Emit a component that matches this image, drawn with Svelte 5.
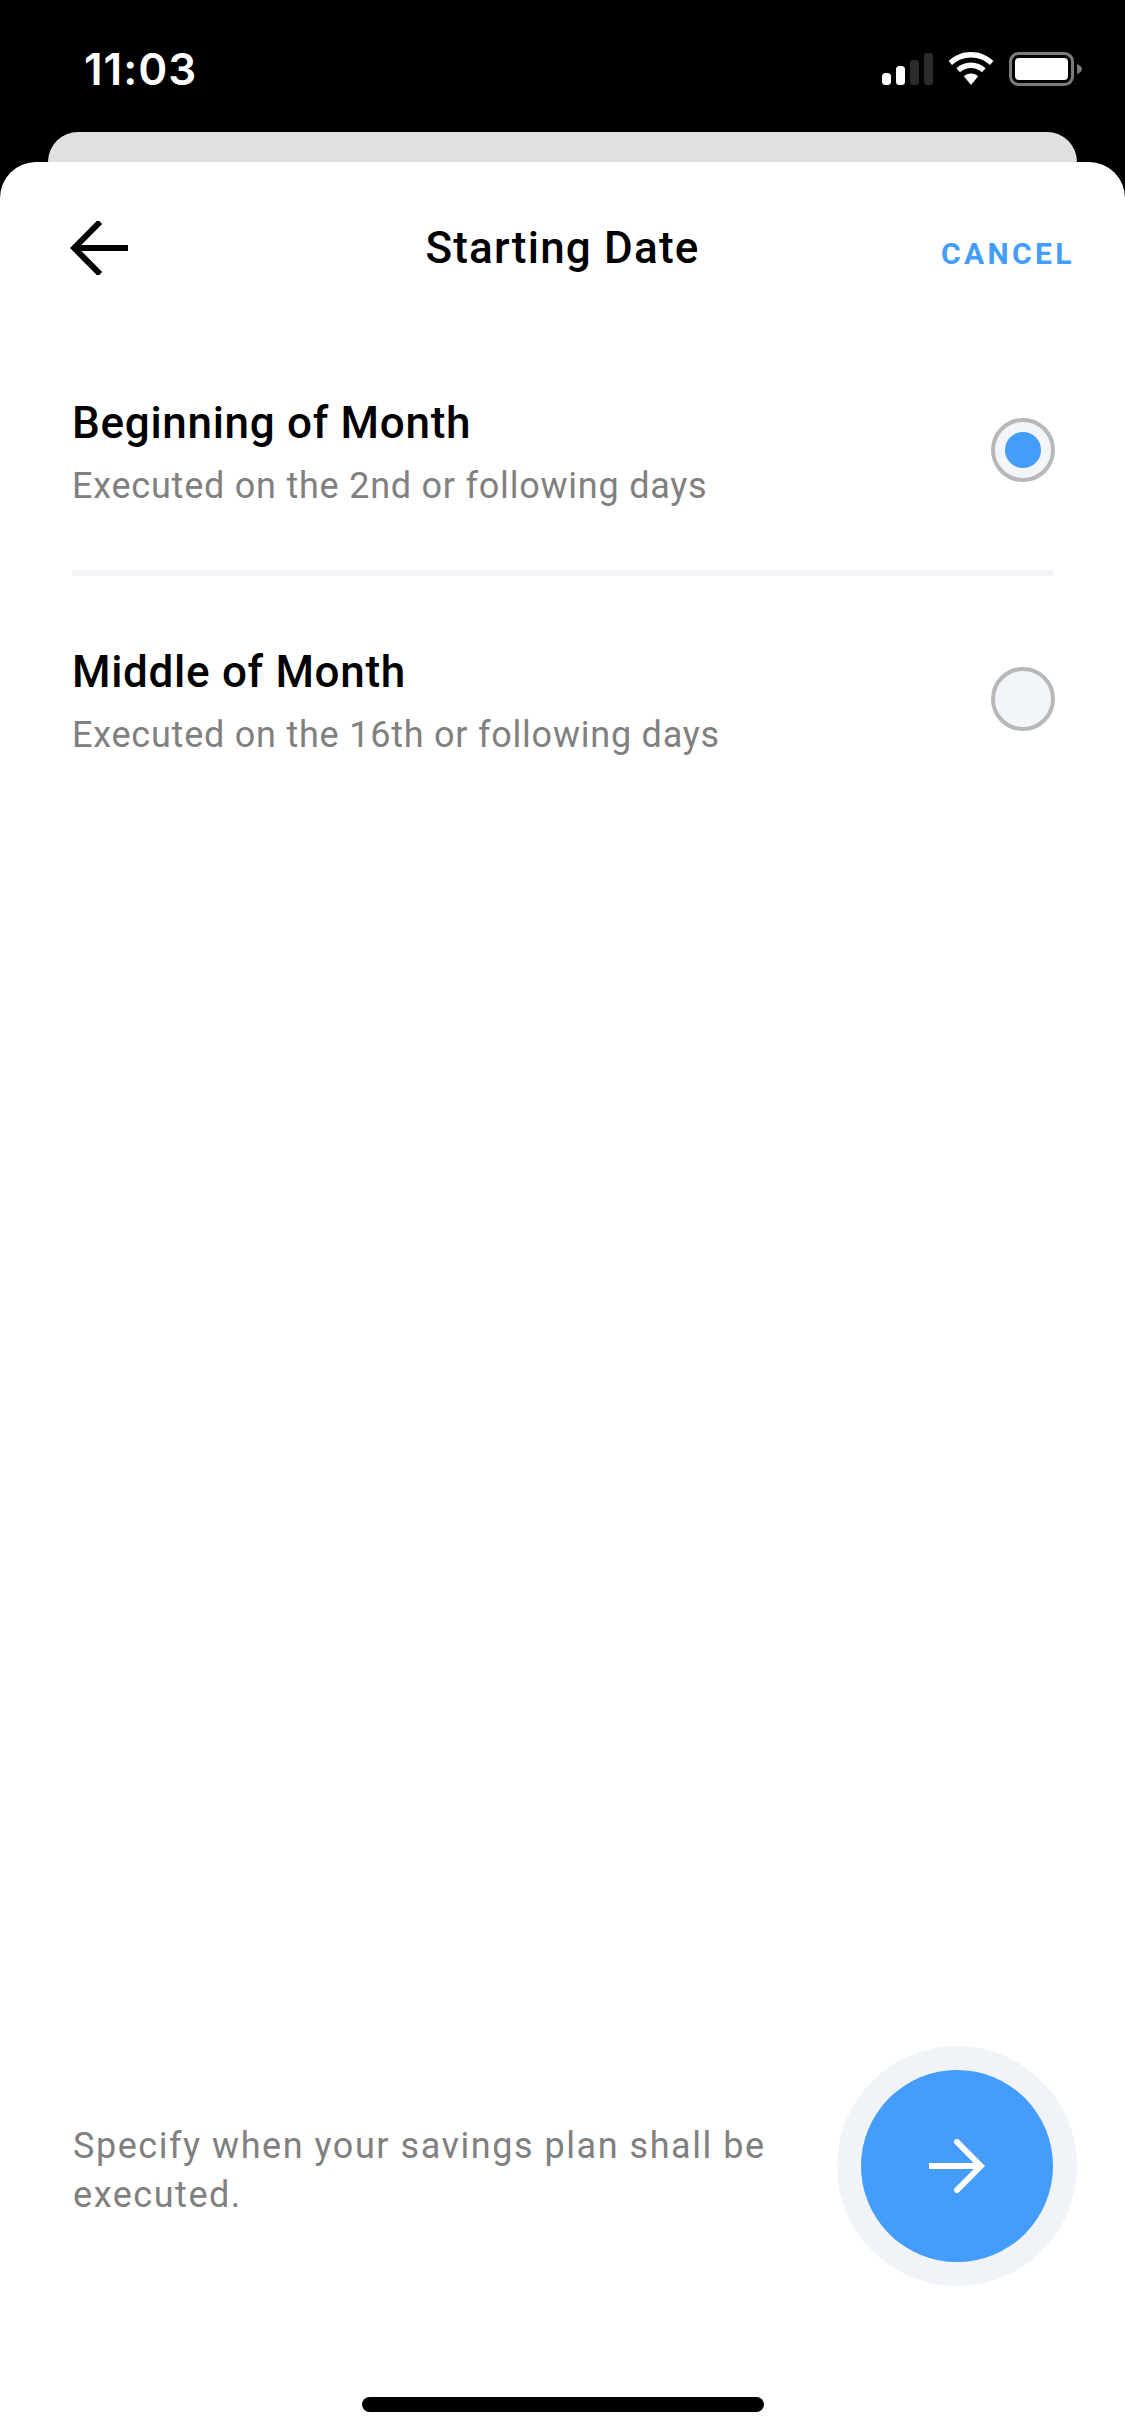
<script>
  const options = [
    { title: 'Beginning of Month', sub: 'Executed on the 2nd or following days', on: true },
    { title: 'Middle of Month', sub: 'Executed on the 16th or following days', on: false }
  ];
</script>

<div class="page">
  <div class="status">
    <span class="time">11:03</span>
    <div class="status-icons">
      <svg width="51" height="32" viewBox="0 0 51 32" fill="#fff">
        <rect x="0" y="20" width="9" height="12" rx="3.5" />
        <rect x="14" y="13" width="9" height="19" rx="3.5" />
        <rect x="28" y="7" width="9" height="25" rx="3" fill="#2b2b2b" />
        <rect x="42" y="0" width="9" height="32" rx="3" fill="#2b2b2b" />
      </svg>
      <svg width="46" height="33" viewBox="0 0 46 33" fill="#fff">
        <path d="M23 0C14.300 0 6.500 3.400 0.600 9L4 13C9 8.200 15.700 5.400 23 5.400S37 8.200 42 13L45.400 9C39.500 3.400 31.700 0 23 0Z" />
        <path d="M23 10.500C17.400 10.500 12.300 12.700 8.400 16.200L12 20.200C14.900 17.500 18.800 15.900 23 15.900S31.100 17.500 34 20.200L37.600 16.200C33.700 12.700 28.600 10.500 23 10.500Z" />
        <path d="M23 21.500C20.300 21.500 17.800 22.500 15.900 24.200L23 33L30.100 24.200C28.200 22.500 25.700 21.500 23 21.500Z" />
      </svg>
      <svg class="battery" width="73" height="34" viewBox="0 0 73 34" fill="none">
        <rect x="1.500" y="1.500" width="62" height="31" rx="8" stroke="#7b7b7b" stroke-width="3" />
        <rect x="6" y="6" width="53" height="22" rx="4" fill="#fff" />
        <path d="M68 12C71 13 73 15 73 17S71 21 68 22Z" fill="#7b7b7b" />
      </svg>
    </div>
  </div>

  <div class="behind"></div>

  <main class="sheet">
    <header class="nav">
      <button class="back" aria-label="Back">
        <svg width="58" height="54" viewBox="0 0 58 54" fill="none" stroke="#000" stroke-width="6">
          <path d="M58 27H4" />
          <path d="M28 3L4.200 27L28 51" stroke-linecap="square" />
        </svg>
      </button>
      <h1>Starting Date</h1>
      <span class="cancel">CANCEL</span>
    </header>

    <ul class="options">
      {#each options as o, i}
        <li class="option" class:first={i === 0}>
          <div class="labels">
            <div class="opt-title">{o.title}</div>
            <div class="opt-sub">{o.sub}</div>
          </div>
          <span class="radio">
            {#if o.on}<span class="dot"></span>{/if}
          </span>
        </li>
      {/each}
    </ul>

    <footer class="foot">
      <p>Specify when your savings plan shall be executed.</p>
      <div class="halo">
        <button class="next" aria-label="Next">
          <svg width="56" height="54" viewBox="0 0 56 54" fill="none" stroke="#fff" stroke-width="6">
            <path d="M0 27H50" />
            <path d="M28 3L51.800 27L28 51" stroke-linecap="round" />
          </svg>
        </button>
      </div>
    </footer>

    <div class="home-wrap"><div class="home"></div></div>
  </main>
</div>

<style>
  :global(body) {
    margin: 0;
    background: #000;
  }
  .page {
    width: 1125px;
    height: 2436px;
    background: #000;
    display: flex;
    flex-direction: column;
    font-family: Roboto, "Noto Sans", sans-serif;
    overflow: hidden;
  }
  .status {
    height: 132px;
    box-sizing: border-box;
    padding: 45px 43px 0 84px;
    display: flex;
    justify-content: space-between;
    align-items: flex-start;
    color: #fff;
  }
  .time {
    font-family: Inter, sans-serif;
    font-weight: 600;
    font-size: 44px;
    line-height: 48px;
    letter-spacing: 1px;
  }
  .status-icons {
    display: flex;
    align-items: flex-end;
    gap: 15px;
    padding-top: 7px;
  }
  .battery {
    margin-bottom: -1px;
  }
  .behind {
    height: 40px;
    margin: 0 48px -10px;
    background: #e0e0e0;
    border-radius: 30px 30px 0 0;
    flex: none;
  }
  .sheet {
    flex: 1;
    position: relative;
    background: #fff;
    border-radius: 36px 36px 0 0;
    display: flex;
    flex-direction: column;
    min-height: 0;
  }
  .nav {
    display: flex;
    align-items: center;
    justify-content: space-between;
    height: 54px;
    margin-top: 59px;
    padding: 0 50px 0 70px;
    position: relative;
  }
  .back,
  .next {
    border: 0;
    padding: 0;
    background: none;
    display: flex;
    align-items: center;
    justify-content: center;
  }
  h1 {
    position: absolute;
    left: 0;
    right: 0;
    top: 0;
    margin: 0;
    text-align: center;
    font-size: 44px;
    line-height: 54px;
    font-weight: 500;
    letter-spacing: 1.2px;
    color: #000;
    pointer-events: none;
  }
  .cancel {
    font-size: 30px;
    line-height: 36px;
    font-weight: 700;
    letter-spacing: 3.4px;
    color: #449cfb;
    margin-top: 12px;
  }
  .options {
    list-style: none;
    margin: 122px 0 0;
    padding: 0 72px;
  }
  .option {
    display: flex;
    align-items: flex-start;
    justify-content: space-between;
    height: 179px;
    box-sizing: border-box;
  }
  .option.first {
    margin-bottom: 70px;
    border-bottom: 6px solid #f3f5fa;
  }
  .labels {
    display: flex;
    flex-direction: column;
    gap: 15px;
    margin-left: 0;
  }
  .opt-title {
    font-size: 44px;
    line-height: 52px;
    font-weight: 500;
    letter-spacing: 0.7px;
    color: #000;
  }
  .opt-sub {
    font-size: 36px;
    line-height: 44px;
    letter-spacing: 0.77px;
    color: #808080;
  }
  .radio {
    width: 64px;
    height: 64px;
    box-sizing: border-box;
    border: 4px solid #b8b8b8;
    border-radius: 50%;
    background: #f2f5f9;
    display: flex;
    align-items: center;
    justify-content: center;
    flex: none;
    margin: 21px -2px 0 0;
  }
  .dot {
    width: 36px;
    height: 36px;
    border-radius: 50%;
    background: #449cfb;
  }
  .foot {
    margin-top: auto;
    display: flex;
    align-items: center;
    justify-content: space-between;
    padding: 0 48px 0 73px;
  }
  .foot p {
    margin: 0;
    width: 720px;
    padding-top: 9px;
    font-size: 36px;
    line-height: 49px;
    letter-spacing: 1.54px;
    color: #808080;
  }
  .halo {
    width: 240px;
    height: 240px;
    border-radius: 50%;
    background: #f0f3f8;
    display: flex;
    align-items: center;
    justify-content: center;
    flex: none;
  }
  .next {
    width: 192px;
    height: 192px;
    border-radius: 50%;
    background: #449cfb;
  }
  .home-wrap {
    height: 150px;
    display: flex;
    justify-content: center;
    align-items: flex-end;
    padding-bottom: 24px;
    box-sizing: border-box;
    flex: none;
  }
  .home {
    width: 402px;
    height: 15px;
    border-radius: 8px;
    background: #000;
  }
</style>
